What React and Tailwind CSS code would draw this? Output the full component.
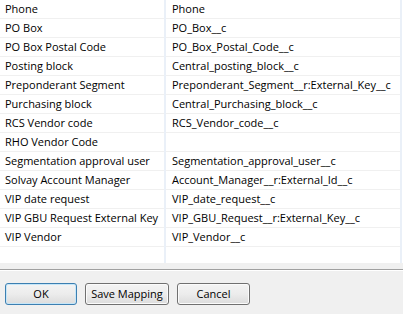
import React from "react";

const rows = [
  ["Phone", "Phone"],
  ["PO Box", "PO_Box__c"],
  ["PO Box Postal Code", "PO_Box_Postal_Code__c"],
  ["Posting block", "Central_posting_block__c"],
  ["Preponderant Segment", "Preponderant_Segment__r:External_Key__c"],
  ["Purchasing block", "Central_Purchasing_block__c"],
  ["RCS Vendor code", "RCS_Vendor_code__c"],
  ["RHO Vendor Code", ""],
  ["Segmentation approval user", "Segmentation_approval_user__c"],
  ["Solvay Account Manager", "Account_Manager__r:External_Id__c"],
  ["VIP date request", "VIP_date_request__c"],
  ["VIP GBU Request External Key", "VIP_GBU_Request__r:External_Key__c"],
  ["VIP Vendor", "VIP_Vendor__c"],
];

function Button({ children, primary, width }) {
  return (
    <button
      className={
        "h-[22px] rounded-[3px] border text-[11px] text-black bg-gradient-to-b from-[#f4f4f4] via-[#ececec] to-[#dcdcdc] " +
        (primary ? "border-[#3c7fb1] shadow-[inset_0_0_0_1px_#c6e6f8]" : "border-[#707070] shadow-[inset_0_0_0_1px_#fbfbfb]")
      }
      style={{ width }}
    >
      {children}
    </button>
  );
}

export default function App() {
  return (
    <div
      className="w-[403px] h-[314px] overflow-hidden bg-[#f0f0f0] flex flex-col text-black"
      style={{ fontFamily: '"Open Sans", "Noto Sans", sans-serif' }}
    >
      <div className="h-[263px] bg-white flex relative">
        <div className="w-[164px] flex flex-col">
          {rows.map(([a], i) => (
            <div key={i} className="h-[19px] border-b border-[#f0f0f0] pl-[5px] text-[11px] leading-[18px] whitespace-nowrap">
              {a}
            </div>
          ))}
          <div className="flex-1" />
        </div>
        <div className="w-[2px] bg-[#eaf0f8]" />
        <div className="w-[234px] flex flex-col">
          {rows.map(([, b], i) => (
            <div key={i} className="h-[19px] border-b border-[#f0f0f0] pl-[6px] text-[11px] leading-[18px] whitespace-nowrap">
              {b}
            </div>
          ))}
          <div className="flex-1" />
        </div>
        <div className="w-[2px] bg-[#eaf0f8]" />
        <div className="flex-1" />
      </div>
      <div className="h-[6px]" />
      <div className="h-[1px] bg-[#a0a0a0]" />
      <div className="h-[1px] bg-white" />
      <div className="flex gap-[8px] pl-[5px] pt-[12px]">
        <Button primary width={72}>OK</Button>
        <Button width={84}>Save Mapping</Button>
        <Button width={73}>Cancel</Button>
      </div>
    </div>
  );
}
